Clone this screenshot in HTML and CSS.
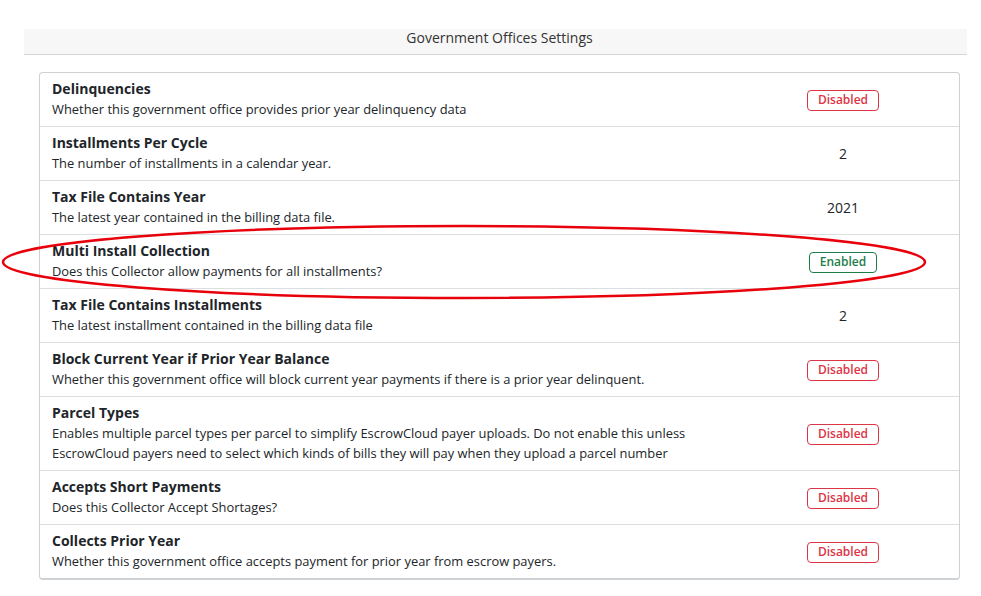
FILE: index.html
```html
<!DOCTYPE html>
<html lang="en">

<head>
    <meta charset="UTF-8">
    <meta name="viewport" content="width=device-width, initial-scale=1.0">
    <title>Government Offices Settings</title>
    <link rel="stylesheet" href="styles.css">
</head>

<body>
    <div class="page">
        <div class="title-bar">Government Offices Settings</div>

        <div class="settings-card">
            <div class="setting-row">
                <div class="setting-info">
                    <div class="setting-name">Delinquencies</div>
                    <div class="setting-desc">Whether this government office provides prior year delinquency data</div>
                </div>
                <div class="setting-value"><span class="badge badge-off">Disabled</span></div>
            </div>
            <div class="setting-row">
                <div class="setting-info">
                    <div class="setting-name">Installments Per Cycle</div>
                    <div class="setting-desc">The number of installments in a calendar year.</div>
                </div>
                <div class="setting-value">2</div>
            </div>
            <div class="setting-row">
                <div class="setting-info">
                    <div class="setting-name">Tax File Contains Year</div>
                    <div class="setting-desc">The latest year contained in the billing data file.</div>
                </div>
                <div class="setting-value">2021</div>
            </div>
            <div class="setting-row">
                <div class="setting-info">
                    <div class="setting-name">Multi Install Collection</div>
                    <div class="setting-desc">Does this Collector allow payments for all installments?</div>
                </div>
                <div class="setting-value"><span class="badge badge-on">Enabled</span></div>
            </div>
            <div class="setting-row">
                <div class="setting-info">
                    <div class="setting-name">Tax File Contains Installments</div>
                    <div class="setting-desc">The latest installment contained in the billing data file</div>
                </div>
                <div class="setting-value">2</div>
            </div>
            <div class="setting-row">
                <div class="setting-info">
                    <div class="setting-name">Block Current Year if Prior Year Balance</div>
                    <div class="setting-desc">Whether this government office will block current year payments if there is a prior year delinquent.</div>
                </div>
                <div class="setting-value"><span class="badge badge-off">Disabled</span></div>
            </div>
            <div class="setting-row">
                <div class="setting-info">
                    <div class="setting-name">Parcel Types</div>
                    <div class="setting-desc">Enables multiple parcel types per parcel to simplify EscrowCloud payer uploads. Do not enable this unless EscrowCloud payers need to select which kinds of bills they will pay when they upload a parcel number</div>
                </div>
                <div class="setting-value"><span class="badge badge-off">Disabled</span></div>
            </div>
            <div class="setting-row">
                <div class="setting-info">
                    <div class="setting-name">Accepts Short Payments</div>
                    <div class="setting-desc">Does this Collector Accept Shortages?</div>
                </div>
                <div class="setting-value"><span class="badge badge-off">Disabled</span></div>
            </div>
            <div class="setting-row">
                <div class="setting-info">
                    <div class="setting-name">Collects Prior Year</div>
                    <div class="setting-desc">Whether this government office accepts payment for prior year from escrow payers.</div>
                </div>
                <div class="setting-value"><span class="badge badge-off">Disabled</span></div>
            </div>
        </div>

        <!-- red highlight drawn over the screenshot -->
        <svg class="highlight" width="981" height="596" viewBox="0 0 981 596">
            <ellipse cx="464" cy="262" rx="461" ry="36" fill="none" stroke="#e8000b" stroke-width="2.5" />
        </svg>
    </div>
</body>

</html>
```
FILE: styles.css
```css
body {
    margin: 0;
    font-family: "Open Sans", "Liberation Sans", sans-serif;
    color: #212529;
    background: #fff;
}

.page {
    position: relative;
    padding-top: 29px;
}

.title-bar {
    margin: 0 14px 0 24px;
    padding: 0 0 8px 8px;
    background-color: #f7f7f7;
    border-bottom: 1px solid #d6d6d6;
    text-align: center;
    font-size: 14px;
    line-height: 17px;
    color: #333;
}

.settings-card {
    margin: 17px 21px 0 39px;
    border: 1px solid #d0d0d0;
    border-bottom: 2px solid #cfd2d4;
    border-radius: 4px;
}

.setting-row {
    display: flex;
    align-items: center;
    padding: 6px 0 7px 12px;
    border-bottom: 1px solid #dcdfe1;
}

.setting-row:last-child {
    border-bottom: none;
}

.setting-info {
    flex: 1;
    padding-right: 30px;
}

.setting-name {
    font-size: 14px;
    font-weight: 700;
    line-height: 20px;
}

.setting-desc {
    font-size: 12.9px;
    line-height: 20px;
}

.setting-value {
    width: 232px;
    padding-top: 1px;
    text-align: center;
    font-size: 14px;
}

.badge {
    display: inline-block;
    padding: 1px 10px 2px;
    font-size: 12px;
    line-height: 16px;
    font-weight: 600;
    border: 1px solid;
    border-radius: 4px;
}

.badge-off {
    color: #dc3545;
    border-color: #dc3545;
}

.badge-on {
    color: #1e7e4a;
    border-color: #1e7e4a;
}

.highlight {
    position: absolute;
    top: 0;
    left: 0;
    pointer-events: none;
}
```
